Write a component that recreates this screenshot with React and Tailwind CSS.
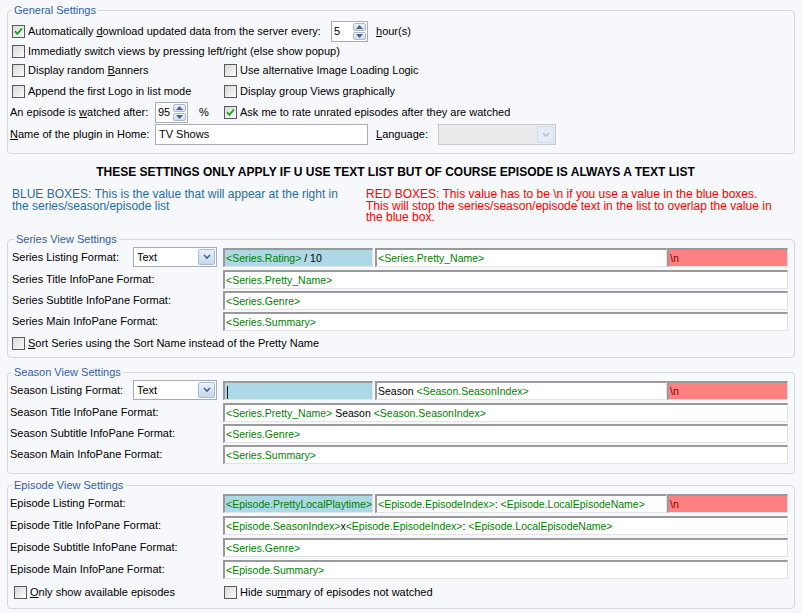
import React from 'react';

const sunken =
  'border-t-2 border-l-2 border-b border-r border-t-[#9a9a9a] border-l-[#9a9a9a] border-b-[#e3e3e3] border-r-[#e3e3e3]';

const Check = ({ checked }) => (
  <span className="w-[13px] h-[13px] shrink-0 border border-[#5a5a5a] bg-gradient-to-br from-[#d8d8d8] to-[#fbfbfb] flex items-center justify-center">
    {checked && (
      <svg width="9" height="9" viewBox="0 0 9 9">
        <path d="M1 4.2 L3.4 6.8 L8 1.4" fill="none" stroke="#21a121" strokeWidth="1.8" />
      </svg>
    )}
  </span>
);

const U = ({ children }) => <span className="underline underline-offset-[1px]">{children}</span>;

const Option = ({ checked, children, className = '' }) => (
  <div className={`flex items-center gap-[3px] ${className}`}>
    <Check checked={checked} />
    <span>{children}</span>
  </div>
);

const Arrow = ({ up }) => (
  <svg width="7" height="4" viewBox="0 0 7 4">
    <path d={up ? 'M0 4 L3.5 0 L7 4 Z' : 'M0 0 L3.5 4 L7 0 Z'} fill="#4d6185" />
  </svg>
);

const Spinner = ({ value, className = '' }) => (
  <div className={`flex h-[21px] border border-[#abadb3] bg-white ${className}`}>
    <span className="flex-1 pl-[2px] leading-[19px]">{value}</span>
    <div className="flex flex-col w-[15px] p-[1px] gap-[1px]">
      <span className="flex-1 flex items-center justify-center rounded-[2px] border border-[#a9b9cf] bg-gradient-to-b from-[#eef3f9] to-[#cfdcec]">
        <Arrow up />
      </span>
      <span className="flex-1 flex items-center justify-center rounded-[2px] border border-[#a9b9cf] bg-gradient-to-b from-[#eef3f9] to-[#cfdcec]">
        <Arrow />
      </span>
    </div>
  </div>
);

const Combo = ({ value, disabled, className = '' }) => (
  <div
    className={`flex h-[20px] border ${
      disabled ? 'border-[#c9c9c9] bg-[#ebebeb]' : 'border-[#a5acb5] bg-white'
    } ${className}`}
  >
    <span className="flex-1 pl-[3px] leading-[18px]">{value}</span>
    <span
      className={`w-[17px] m-[1px] flex items-center justify-center rounded-[2px] border ${
        disabled ? 'border-[#cfdbe9] bg-[#e4edf7]' : 'border-[#a7bcd7] bg-gradient-to-b from-[#eaf2fb] to-[#c5d8ee]'
      }`}
    >
      <svg width="8" height="6" viewBox="0 0 8 6">
        <path d="M1 1 L4 4 L7 1" fill="none" stroke={disabled ? '#b9c4d2' : '#4d6185'} strokeWidth="1.6" />
      </svg>
    </span>
  </div>
);

const G = ({ children }) => <span className="text-[#008000]">{children}</span>;

// sunken text box, as in the WinForms designer
const Box = ({ children, className = '', bg = 'bg-white' }) => (
  <div
    className={`h-[19px] ${sunken} ${bg} pl-[1px] text-[10.5px] leading-[16px] whitespace-nowrap overflow-hidden ${className}`}
  >
    {children}
  </div>
);

const Group = ({ title, className = '', children }) => (
  <fieldset className={`border border-[#d5d9de] rounded-[4px] ${className}`}>
    <legend className="ml-[2px] px-[2px] leading-[14px] text-[#2f5da8]">{title}</legend>
    {children}
  </fieldset>
);

const FieldRow = ({ label, labelW, children, className = 'mt-[2px]' }) => (
  <div className={`flex items-center h-[19px] ${className}`}>
    <span style={{ width: labelW }} className="shrink-0">
      {label}
    </span>
    <Box className="w-[565px]">{children}</Box>
  </div>
);

const ListingRow = ({ label, labelW, combo, blue, white }) => (
  <div className="flex items-start h-[21px]">
    <span style={{ width: labelW }} className="shrink-0 leading-[20px]">
      {label}
    </span>
    {combo ? <Combo value="Text" className="w-[84px]" /> : <span className="w-[84px]" />}
    <Box bg="bg-[#add8e6]" className="ml-[6px] mt-[1px] w-[150px]">
      {blue}
    </Box>
    <Box className="ml-[2px] mt-[1px] w-[292px]">{white}</Box>
    <Box bg="bg-[#ff8080]" className="mt-[1px] w-[121px] text-[#800000]">
      \n
    </Box>
  </div>
);

export default function App() {
  return (
    <div className="w-[802px] h-[613px] bg-[#f7f8fb] px-[7px] pt-[3px] text-[11px] text-black font-['Liberation_Sans',Arial,sans-serif] overflow-hidden">
      <Group title="General Settings" className="pl-[2px] pr-[6px] pt-[3px] pb-[7px]">
        <div className="flex items-center h-[22px] pl-[2px]">
          <Option checked className="w-[319px]">
            Automatically <U>d</U>ownload updated data from the server every:
          </Option>
          <Spinner value="5" className="w-[37px]" />
          <span className="ml-[8px]">
            <U>h</U>our(s)
          </span>
        </div>
        <div className="flex items-center h-[18px] pl-[2px]">
          <Option>Immediatly switch views by pressing left/right (else show popup)</Option>
        </div>
        <div className="flex items-center h-[21px] pl-[2px]">
          <Option className="w-[212px]">
            Display random <U>B</U>anners
          </Option>
          <Option>Use alternative Image Loading Logic</Option>
        </div>
        <div className="flex items-center h-[21px] pl-[2px]">
          <Option className="w-[212px]">Append the first Logo in list mode</Option>
          <Option>Display group Views graphically</Option>
        </div>
        <div className="flex items-center h-[21px]">
          <span className="w-[145px]">
            An episode is <U>w</U>atched after:
          </span>
          <Spinner value="95" className="w-[33px]" />
          <span className="ml-[11px] w-[25px]">%</span>
          <Option checked>Ask me to rate unrated episodes after they are watched</Option>
        </div>
        <div className="flex items-center h-[23px]">
          <span className="w-[145px]">
            <U>N</U>ame of the plugin in Home:
          </span>
          <div className="w-[213px] h-[21px] border border-[#abadb3] bg-white pl-[3px] leading-[19px]">TV Shows</div>
          <span className="ml-[8px] w-[62px]">
            <U>L</U>anguage:
          </span>
          <Combo disabled value="" className="w-[118px] h-[21px]" />
        </div>
      </Group>

      <div className="mt-[11px] pr-[11px] text-center font-bold text-[12px] leading-[14px]">
        THESE SETTINGS ONLY APPLY IF U USE TEXT LIST BUT OF COURSE EPISODE IS ALWAYS A TEXT LIST
      </div>
      <div className="flex mt-[10px] text-[12px] leading-[11.5px] h-[36px]">
        <p className="ml-[5px] w-[340px] text-[#1e6ea0]">
          BLUE BOXES: This is the value that will appear at the right in the series/season/episode list
        </p>
        <p className="ml-[14px] w-[415px] text-[#ff0000]">
          RED BOXES: This value has to be \n if you use a value in the blue boxes. This will stop the
          series/season/episode text in the list to overlap the value in the blue box.
        </p>
      </div>

      <Group title="Series View Settings" className="mt-[7px] pl-[4px] pt-[1px] pb-[4px]">
        <ListingRow
          label="Series Listing Format:"
          labelW={121}
          combo
          blue={
            <>
              <G>&lt;Series.Rating&gt;</G> / 10
            </>
          }
          white={<G>&lt;Series.Pretty_Name&gt;</G>}
        />
        <FieldRow label="Series Title InfoPane Format:" labelW={211}>
          <G>&lt;Series.Pretty_Name&gt;</G>
        </FieldRow>
        <FieldRow label="Series Subtitle InfoPane Format:" labelW={211}>
          <G>&lt;Series.Genre&gt;</G>
        </FieldRow>
        <FieldRow label="Series Main InfoPane Format:" labelW={211}>
          <G>&lt;Series.Summary&gt;</G>
        </FieldRow>
        <div className="flex items-center h-[20px] mt-[2px]">
          <Option>
            <U>S</U>ort Series using the Sort Name instead of the Pretty Name
          </Option>
        </div>
      </Group>

      <Group title="Season View Settings" className="mt-[7px] pl-[2px] pt-[1px] pb-[9px]">
        <ListingRow
          label="Season Listing Format:"
          labelW={123}
          combo
          blue={<span className="inline-block w-px h-[13px] bg-black align-middle ml-[1px]" />}
          white={
            <>
              Season <G>&lt;Season.SeasonIndex&gt;</G>
            </>
          }
        />
        <FieldRow label="Season Title InfoPane Format:" labelW={213}>
          <G>&lt;Series.Pretty_Name&gt;</G> Season <G>&lt;Season.SeasonIndex&gt;</G>
        </FieldRow>
        <FieldRow label="Season Subtitle InfoPane Format:" labelW={213}>
          <G>&lt;Series.Genre&gt;</G>
        </FieldRow>
        <FieldRow label="Season Main InfoPane Format:" labelW={213}>
          <G>&lt;Series.Summary&gt;</G>
        </FieldRow>
      </Group>

      <Group title="Episode View Settings" className="mt-[4px] pl-[2px] pt-[1px] pb-[5px]">
        <ListingRow
          label="Episode Listing Format:"
          labelW={123}
          blue={<G>&lt;Episode.PrettyLocalPlaytime&gt;</G>}
          white={
            <>
              <G>&lt;Episode.EpisodeIndex&gt;</G>: <G>&lt;Episode.LocalEpisodeName&gt;</G>
            </>
          }
        />
        <FieldRow label="Episode Title InfoPane Format:" labelW={213}>
          <G>&lt;Episode.SeasonIndex&gt;</G>x<G>&lt;Episode.EpisodeIndex&gt;</G>: <G>&lt;Episode.LocalEpisodeName&gt;</G>
        </FieldRow>
        <FieldRow label="Episode Subtitle InfoPane Format:" labelW={213} className="mt-[3px]">
          <G>&lt;Series.Genre&gt;</G>
        </FieldRow>
        <FieldRow label="Episode Main InfoPane Format:" labelW={213} className="mt-[3px]">
          <G>&lt;Episode.Summary&gt;</G>
        </FieldRow>
        <div className="flex items-center h-[21px] mt-[3px] pl-[4px]">
          <Option className="w-[210px]">
            <U>O</U>nly show available episodes
          </Option>
          <Option>
            Hide su<U>m</U>mary of episodes not watched
          </Option>
        </div>
      </Group>
    </div>
  );
}
